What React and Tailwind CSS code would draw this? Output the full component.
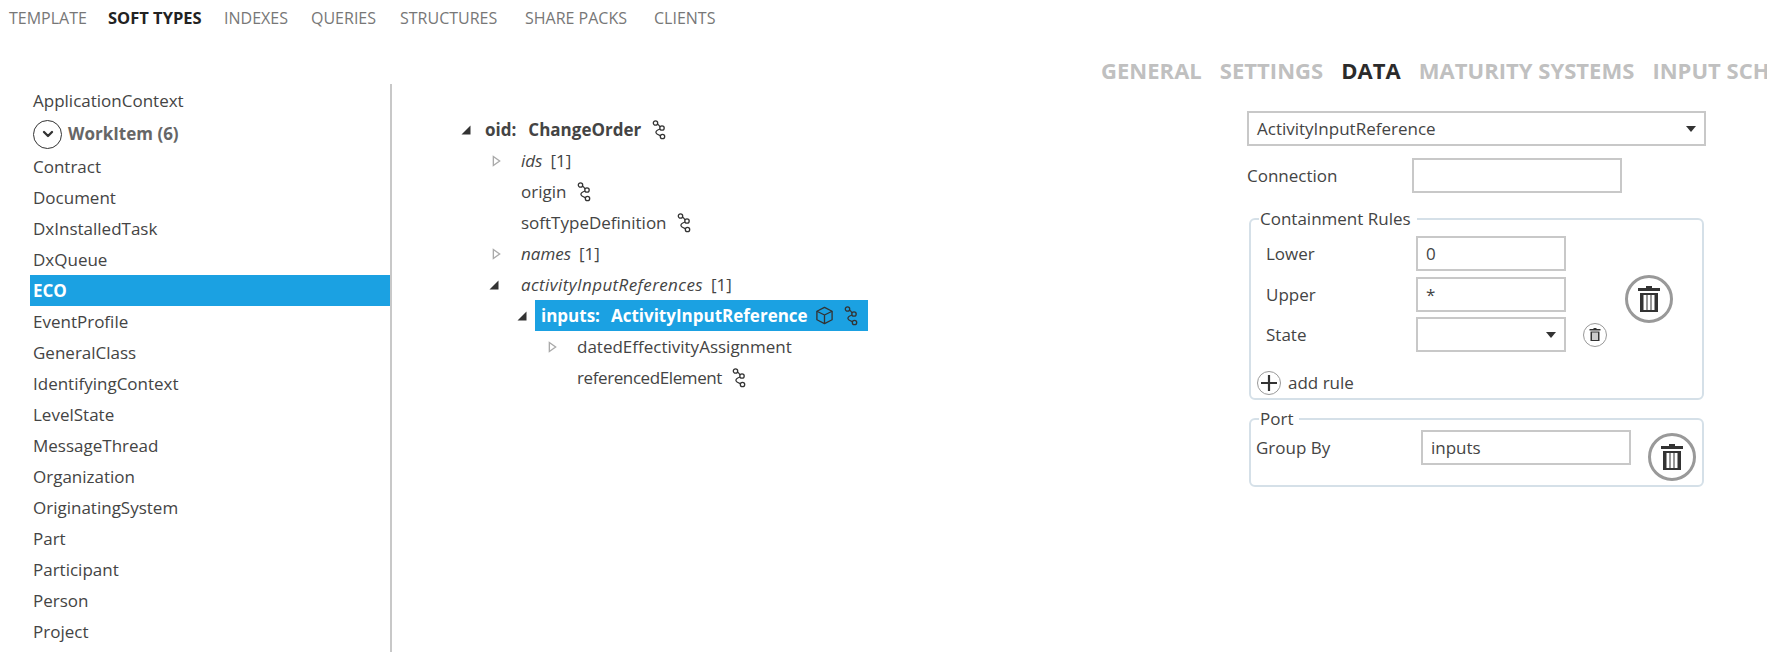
import { ChevronDown } from 'lucide-react'

const font = { fontFamily: '"Open Sans", sans-serif' }

const topTabs = [
  { label: 'TEMPLATE', cls: 'w-[99px]' },
  { label: 'SOFT TYPES', cls: 'w-[116px] font-bold text-[#222] text-[16.5px]' },
  { label: 'INDEXES', cls: 'w-[87px]' },
  { label: 'QUERIES', cls: 'w-[89px]' },
  { label: 'STRUCTURES', cls: 'w-[125px]' },
  { label: 'SHARE PACKS', cls: 'w-[129px]' },
  { label: 'CLIENTS', cls: 'w-[70px]' }
]

const rightTabs = ['GENERAL', 'SETTINGS', 'DATA', 'MATURITY SYSTEMS', 'INPUT SCHEMA']

const softTypes = [
  'Contract', 'Document', 'DxInstalledTask', 'DxQueue', 'ECO', 'EventProfile',
  'GeneralClass', 'IdentifyingContext', 'LevelState', 'MessageThread',
  'Organization', 'OriginatingSystem', 'Part', 'Participant', 'Person', 'Project'
]

function LinkIcon({ className = '' }) {
  return (
    <svg viewBox="0 0 14 20" fill="none" stroke="#333" strokeWidth="1.3" className={`w-[14px] h-[20px] ${className}`}>
      <circle cx="3.5" cy="3" r="2.2" />
      <circle cx="10" cy="8" r="2.2" />
      <circle cx="10.5" cy="16.5" r="2.2" />
      <path d="M5.5 4 C7 5 7.5 6 8 6.8 M8 9 C5 10 3.5 11 4 12.8 C4.5 14.5 7 15 8.6 15.6" />
    </svg>
  )
}

function CubeIcon() {
  return (
    <svg viewBox="0 0 20 20" fill="none" stroke="#333" strokeWidth="1.4" strokeLinejoin="round" className="w-[19px] h-[19px]">
      <path d="M10 1.5 L18 5.5 V14.5 L10 18.5 L2 14.5 V5.5 Z" />
      <path d="M2 5.5 L10 9.5 L18 5.5 M10 9.5 V18.5" />
    </svg>
  )
}

function TrashIcon({ size, ring }) {
  return (
    <span
      className={`flex items-center justify-center rounded-full border-[#999] bg-white ${ring}`}
      style={{ width: size, height: size }}
    >
      <svg viewBox="0 0 24 28" fill="#333" style={{ width: size * 0.5, height: size * 0.62 }}>
        <path d="M9 1 H15 V3 H23 V6 H1 V3 H9 Z" />
        <path fillRule="evenodd" d="M3 8 H21 V27 H3 Z M6.5 10 V25 H9.5 V10 Z M10.5 10 V25 H13.5 V10 Z M14.5 10 V25 H17.5 V10 Z" />
      </svg>
    </span>
  )
}

function Caret({ open }) {
  if (open) {
    return (
      <svg viewBox="0 0 10 10" className="w-[10px] h-[10px]">
        <path d="M9.5 0.5 V9.5 H0.5 Z" fill="#333" />
      </svg>
    )
  }

  return (
    <svg viewBox="0 0 10 12" fill="none" stroke="#aaa" strokeWidth="1.5" className="ml-[3px] w-[9px] h-[12px]">
      <path d="M1.5 1 L8.5 6 L1.5 11 Z" />
    </svg>
  )
}

function TreeRow({ indent, caret, children }) {
  return (
    <div className="h-[31px] flex items-center" style={{ paddingLeft: indent }}>
      <span className="w-[32px] flex items-center">
        {caret && <Caret open={caret === 'open'} />}
      </span>
      {children}
    </div>
  )
}

function Field({ className = '', children }) {
  return (
    <div className={`h-[35px] border-2 border-[#c8c8c8] flex items-center px-[8px] ${className}`}>
      {children}
    </div>
  )
}

function SelectArrow() {
  return <span className="ml-auto w-0 h-0 border-x-[5px] border-x-transparent border-t-[6px] border-t-[#333]" />
}

export default function App() {
  return (
    <div className="h-[652px] w-[1767px] overflow-hidden bg-white text-[17px] text-[#444]" style={font}>

      {/* abas do topo */}
      <div className="h-[36px] pl-[9px] flex items-center text-[16px] text-[#777]">
        {topTabs.map((tab) => (
          <span key={tab.label} className={tab.cls}>{tab.label}</span>
        ))}
      </div>

      {/* abas da direita */}
      <div className="h-[48px] pl-[1101px] pt-[20px] flex items-center gap-[18px] text-[22px] font-bold tracking-[0.03px] text-[#c0c0c0] whitespace-nowrap">
        {rightTabs.map((tab) => (
          <span key={tab} className={tab === 'DATA' ? 'text-[#2b2b2b]' : ''}>{tab}</span>
        ))}
      </div>

      <div className="flex h-[568px]">

        {/* lista */}
        <div className="w-[392px] shrink-0 border-r-2 border-[#c8c8c8] pl-[30px] pr-0 pt-px">
          <div className="h-[31px] flex items-center pl-[3px]">ApplicationContext</div>
          <div className="h-[35px] pt-px flex items-center pl-[3px] gap-[6px] font-bold text-[#666]">
            <span className="w-[29px] h-[29px] rounded-full border-[1.5px] border-[#333] flex items-center justify-center">
              <ChevronDown size={16} strokeWidth={3.5} color="#333" />
            </span>
            WorkItem (6)
          </div>
          {softTypes.map((nome) => (
            <div
              key={nome}
              className={nome === 'ECO'
                ? 'h-[31px] flex items-center pl-[3px] bg-[#1ba1e2] text-white font-bold'
                : 'h-[31px] flex items-center pl-[3px]'}
            >
              {nome}
            </div>
          ))}
        </div>

        {/* arvore */}
        <div className="w-[855px] shrink-0 pt-[30px]">
          <div className="h-[31px] flex items-center pl-[69px] font-bold">
            <span className="w-[24px]"><Caret open /></span>
            oid:
            <span className="ml-[12px] mr-[11px]">ChangeOrder</span>
            <LinkIcon />
          </div>
          <TreeRow indent={97} caret="closed"><i>ids</i><span className="ml-[8px]">[1]</span></TreeRow>
          <TreeRow indent={97}>origin<LinkIcon className="ml-[11px]" /></TreeRow>
          <TreeRow indent={97}>softTypeDefinition<LinkIcon className="ml-[10px]" /></TreeRow>
          <TreeRow indent={97} caret="closed"><i>names</i><span className="ml-[8px]">[1]</span></TreeRow>
          <TreeRow indent={97} caret="open">
            <i className="tracking-[0.4px]">activityInputReferences</i>
            <span className="ml-[8px]">[1]</span>
          </TreeRow>
          <div className="h-[31px] flex items-center pl-[125px]">
            <span className="w-[18px]"><Caret open /></span>
            <div className="w-[333px] h-[31px] flex items-center pl-[6px] bg-[#1ba1e2] text-white font-bold">
              inputs:
              <span className="ml-[11px]">ActivityInputReference</span>
              <span className="ml-[7px]"><CubeIcon /></span>
              <LinkIcon className="ml-[10px]" />
            </div>
          </div>
          <TreeRow indent={153} caret="closed">datedEffectivityAssignment</TreeRow>
          <TreeRow indent={153}>
            <span className="tracking-[-0.4px]">referencedElement</span>
            <LinkIcon className="ml-[10px]" />
          </TreeRow>
        </div>

        {/* painel */}
        <div className="w-[459px] shrink-0 pt-[27px]">
          <Field>
            ActivityInputReference
            <SelectArrow />
          </Field>

          <div className="flex items-center mt-[12px] h-[35px]">
            <span className="w-[165px]">Connection</span>
            <Field className="w-[210px]" />
          </div>

          <fieldset className="ml-[2px] w-[455px] h-[191px] mt-[16px] border-2 border-[#d5e0e8] rounded-[6px] pl-[15px] pr-0">
            <legend className="ml-[-7px] pl-px pr-[6px] leading-[20px]">Containment Rules</legend>
            <div className="flex">
              <div className="w-[359px]">
                <div className="flex items-center mt-[7px]">
                  <span className="w-[150px]">Lower</span>
                  <Field className="w-[150px]">0</Field>
                </div>
                <div className="flex items-center mt-[6px]">
                  <span className="w-[150px]">Upper</span>
                  <Field className="w-[150px]">*</Field>
                </div>
                <div className="flex items-center mt-[5px]">
                  <span className="w-[150px]">State</span>
                  <Field className="w-[150px]"><SelectArrow /></Field>
                  <span className="ml-[17px]"><TrashIcon size={24} ring="border" /></span>
                </div>
              </div>
              <div className="mt-[46px]"><TrashIcon size={48} ring="border-[3px]" /></div>
            </div>
            <div className="flex items-center mt-[18px] ml-[-9px] gap-[7px]">
              <span className="w-[24px] h-[24px] rounded-full border border-[#999] flex items-center justify-center text-[#333]">
                <svg viewBox="0 0 16 16" className="w-[16px] h-[16px]" stroke="#333" strokeWidth="2.2">
                  <path d="M8 0 V16 M0 8 H16" />
                </svg>
              </span>
              add rule
            </div>
          </fieldset>

          <fieldset className="ml-[2px] w-[455px] h-[78px] mt-[9px] border-2 border-[#d5e0e8] rounded-[6px] pl-[5px] pr-0">
            <legend className="ml-[3px] pl-px pr-[6px] leading-[20px]">Port</legend>
            <div className="flex items-start">
              <span className="w-[165px] h-[35px] mt-[1px] flex items-center">Group By</span>
              <Field className="w-[210px] mt-[1px]">inputs</Field>
              <span className="ml-[17px] mt-[4px]"><TrashIcon size={48} ring="border-[3px]" /></span>
            </div>
          </fieldset>
        </div>

      </div>
    </div>
  )
}
